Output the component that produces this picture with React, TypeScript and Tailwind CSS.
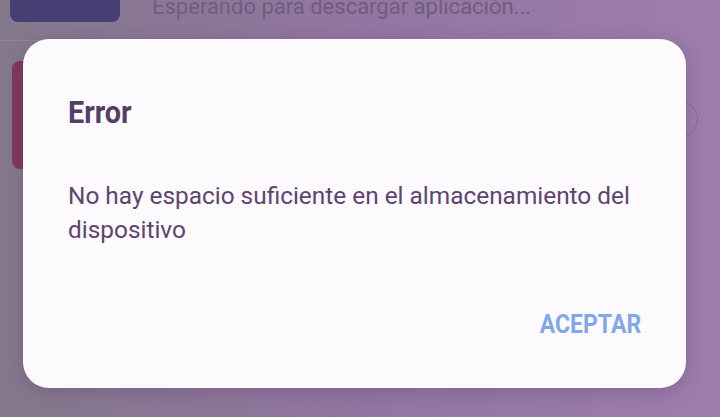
export default function App() {
  return (
    <div className="relative w-[720px] h-[417px] overflow-hidden bg-gradient-to-r from-[#84788b] via-[#9375a2] to-[#9c7dab] font-['Roboto','Liberation_Sans',sans-serif]">
      {/* app behind the dim */}
      <div className="flex flex-col">
        <div className="flex items-start gap-8 h-[22px] pl-[10px] overflow-hidden">
          <div className="w-[110px] h-[22px] rounded-b-[8px] bg-[#463f73]" />
          <div className="-mt-[4px] text-[22px] leading-none text-[#6e5d80]">
            Esperando para descargar aplicación...
          </div>
        </div>
        <div className="h-px mt-[18px] bg-[#9a7ea8]" />
        <div className="flex justify-between items-start mt-[20px] pl-3">
          <div className="w-[40px] h-[108px] rounded-l-[8px] bg-[#82395a]" />
          <div className="w-[36px] h-[36px] mt-[40px] mr-[22px] rounded-full border border-[#876aa0]" />
        </div>
      </div>

      {/* dialog */}
      <div className="absolute left-[23px] top-[39px] w-[663px] h-[349px] rounded-[26px] bg-[#fcfafd] shadow-[0_4px_18px_rgba(70,40,90,0.25)] flex flex-col px-[45px]">
        <div className="mt-[57px] h-[32px]">
          <span className="inline-block origin-left scale-x-[0.9] text-[32px] leading-none font-bold text-[#553e66]">
            Error
          </span>
        </div>
        <div className="mt-[51px] text-[24.4px] leading-[34px] text-[#5e4570]">
          No hay espacio suficiente en el almacenamiento del dispositivo
        </div>
        <div className="mt-[65px] flex justify-end">
          <span className="inline-block origin-right scale-x-[0.92] text-[25px] leading-none font-bold text-[#80a8e8]">
            ACEPTAR
          </span>
        </div>
      </div>
    </div>
  );
}
